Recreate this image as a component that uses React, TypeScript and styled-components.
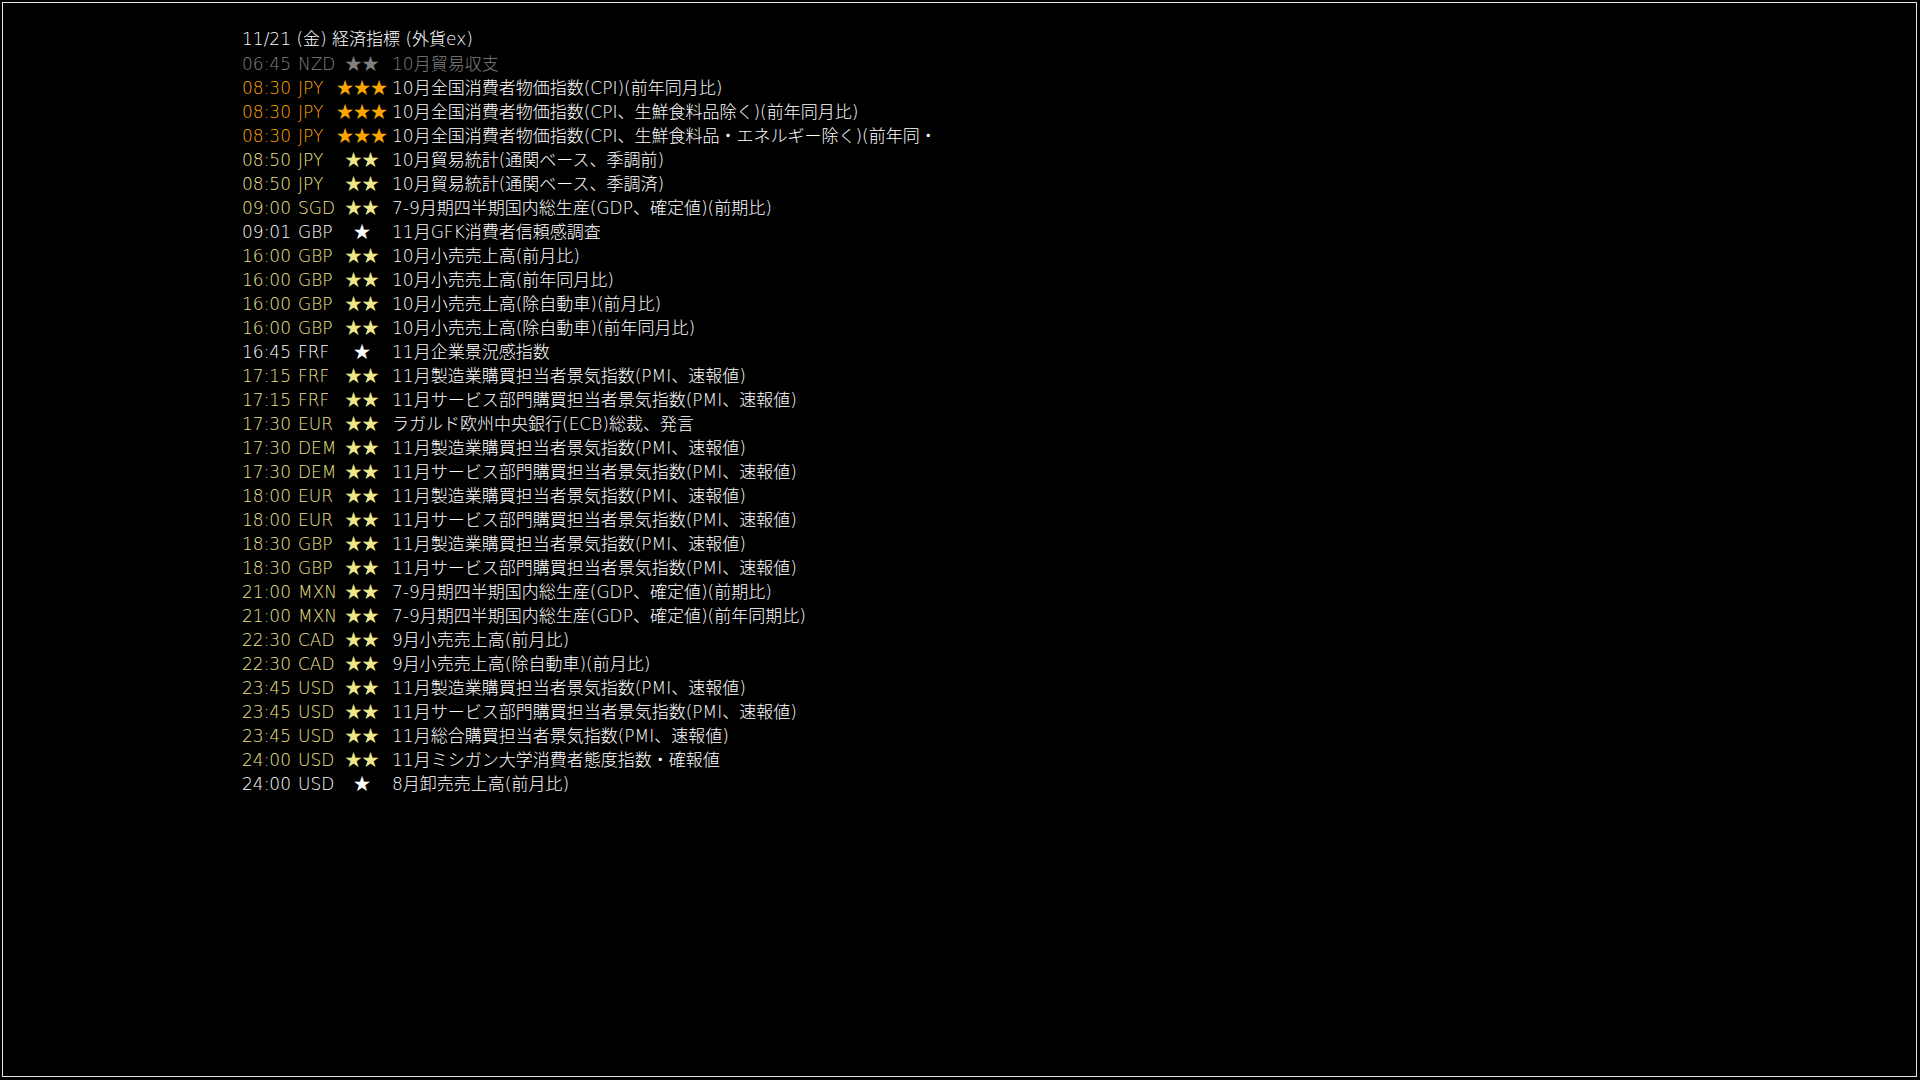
import React from "react";
import styled, { createGlobalStyle } from "styled-components";

type Level = 1 | 2 | 3;

interface EventItem {
  time: string;
  currency: string;
  level: Level;
  title: string;
  past?: boolean;
}

const events: EventItem[] = [
  { time: "06:45", currency: "NZD", level: 2, title: "10月貿易収支", past: true },
  { time: "08:30", currency: "JPY", level: 3, title: "10月全国消費者物価指数(CPI)(前年同月比)" },
  { time: "08:30", currency: "JPY", level: 3, title: "10月全国消費者物価指数(CPI、生鮮食料品除く)(前年同月比)" },
  { time: "08:30", currency: "JPY", level: 3, title: "10月全国消費者物価指数(CPI、生鮮食料品・エネルギー除く)(前年同・" },
  { time: "08:50", currency: "JPY", level: 2, title: "10月貿易統計(通関ベース、季調前)" },
  { time: "08:50", currency: "JPY", level: 2, title: "10月貿易統計(通関ベース、季調済)" },
  { time: "09:00", currency: "SGD", level: 2, title: "7-9月期四半期国内総生産(GDP、確定値)(前期比)" },
  { time: "09:01", currency: "GBP", level: 1, title: "11月GFK消費者信頼感調査" },
  { time: "16:00", currency: "GBP", level: 2, title: "10月小売売上高(前月比)" },
  { time: "16:00", currency: "GBP", level: 2, title: "10月小売売上高(前年同月比)" },
  { time: "16:00", currency: "GBP", level: 2, title: "10月小売売上高(除自動車)(前月比)" },
  { time: "16:00", currency: "GBP", level: 2, title: "10月小売売上高(除自動車)(前年同月比)" },
  { time: "16:45", currency: "FRF", level: 1, title: "11月企業景況感指数" },
  { time: "17:15", currency: "FRF", level: 2, title: "11月製造業購買担当者景気指数(PMI、速報値)" },
  { time: "17:15", currency: "FRF", level: 2, title: "11月サービス部門購買担当者景気指数(PMI、速報値)" },
  { time: "17:30", currency: "EUR", level: 2, title: "ラガルド欧州中央銀行(ECB)総裁、発言" },
  { time: "17:30", currency: "DEM", level: 2, title: "11月製造業購買担当者景気指数(PMI、速報値)" },
  { time: "17:30", currency: "DEM", level: 2, title: "11月サービス部門購買担当者景気指数(PMI、速報値)" },
  { time: "18:00", currency: "EUR", level: 2, title: "11月製造業購買担当者景気指数(PMI、速報値)" },
  { time: "18:00", currency: "EUR", level: 2, title: "11月サービス部門購買担当者景気指数(PMI、速報値)" },
  { time: "18:30", currency: "GBP", level: 2, title: "11月製造業購買担当者景気指数(PMI、速報値)" },
  { time: "18:30", currency: "GBP", level: 2, title: "11月サービス部門購買担当者景気指数(PMI、速報値)" },
  { time: "21:00", currency: "MXN", level: 2, title: "7-9月期四半期国内総生産(GDP、確定値)(前期比)" },
  { time: "21:00", currency: "MXN", level: 2, title: "7-9月期四半期国内総生産(GDP、確定値)(前年同期比)" },
  { time: "22:30", currency: "CAD", level: 2, title: "9月小売売上高(前月比)" },
  { time: "22:30", currency: "CAD", level: 2, title: "9月小売売上高(除自動車)(前月比)" },
  { time: "23:45", currency: "USD", level: 2, title: "11月製造業購買担当者景気指数(PMI、速報値)" },
  { time: "23:45", currency: "USD", level: 2, title: "11月サービス部門購買担当者景気指数(PMI、速報値)" },
  { time: "23:45", currency: "USD", level: 2, title: "11月総合購買担当者景気指数(PMI、速報値)" },
  { time: "24:00", currency: "USD", level: 2, title: "11月ミシガン大学消費者態度指数・確報値" },
  { time: "24:00", currency: "USD", level: 1, title: "8月卸売売上高(前月比)" },
];

const levelColor: Record<Level, string> = {
  1: "#ffffff",
  2: "#f0e68c",
  3: "#ffa500",
};

const GRAY = "#808080";

const GlobalStyle = createGlobalStyle`
  html, body {
    margin: 0;
    padding: 0;
    background: #000;
    width: 1920px;
    height: 1080px;
    overflow: hidden;
  }
  #root {
    width: 1920px;
    height: 1080px;
  }
`;

const Frame = styled.div`
  box-sizing: border-box;
  margin: 2px 3px 0 2px;
  height: 1075px;
  border: 1px solid #e6e6e6;
  background: #000;
  padding: 24px 0 0 239px;
  font-family: "DejaVu Sans", "Noto Sans CJK JP", sans-serif;
  font-weight: 200;
  font-size: 17px;
  line-height: 24px;
  color: #fff;
`;

const List = styled.div`
  display: flex;
  flex-direction: column;
`;

const Header = styled.div`
  height: 24px;
  white-space: nowrap;
  color: #ffffff;
`;

const Row = styled.div<{ $color: string }>`
  display: grid;
  grid-template-columns: 56px 40px 48px 1fr;
  align-items: baseline;
  height: 24px;
  white-space: nowrap;
  color: ${(p) => p.$color};
`;

const Time = styled.span``;

const Currency = styled.span``;

const Stars = styled.span`
  display: flex;
  justify-content: center;
  font-family: "Noto Sans CJK JP", sans-serif;
  font-weight: 400;
`;

const Title = styled.span<{ $past?: boolean }>`
  padding-left: 6px;
  color: ${(p) => (p.$past ? GRAY : "#ffffff")};
`;

export default function App() {
  return (
    <>
      <GlobalStyle />
      <Frame>
        <List>
          <Header>11/21 (金) 経済指標 (外貨ex)</Header>
          {events.map((e, i) => {
            const color = e.past ? GRAY : levelColor[e.level];
            return (
              <Row key={i} $color={color}>
                <Time>{e.time}</Time>
                <Currency>{e.currency}</Currency>
                <Stars>{"★".repeat(e.level)}</Stars>
                <Title $past={e.past}>{e.title}</Title>
              </Row>
            );
          })}
        </List>
      </Frame>
    </>
  );
}
